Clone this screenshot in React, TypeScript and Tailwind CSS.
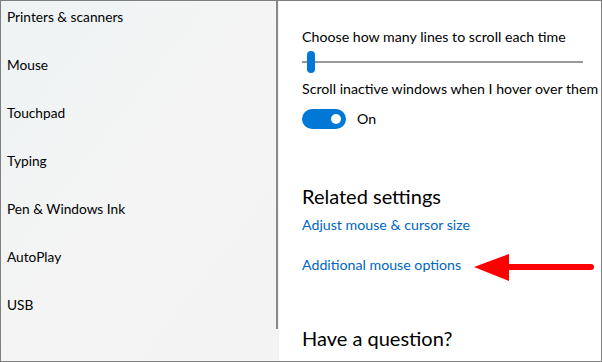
import React from 'react'

const navItems = ['Printers & scanners', 'Mouse', 'Touchpad', 'Typing', 'Pen & Windows Ink', 'AutoPlay', 'USB']

export default function App() {
  return (
    <div
      className="relative flex w-[602px] h-[362px] overflow-hidden border border-[#7f7f7f] bg-white text-[#000] whitespace-nowrap"
      style={{ fontFamily: 'Lato, "Open Sans", sans-serif' }}
    >
      {/* left nav */}
      <div className="relative w-[278px] shrink-0 bg-gradient-to-br from-[#eef3f4] via-[#f4f4f4] to-[#f3f3f3]">
        <div className="flex flex-col gap-[28px] pt-[6px] pl-[6px]">
          {navItems.map((item) => (
            <div key={item} className="h-[20px] text-[13.7px] leading-[20px]">
              {item}
            </div>
          ))}
        </div>
        <div className="absolute right-[1px] top-0 h-[328px] w-[2px] bg-[#8a8a8a]" />
      </div>

      {/* right content */}
      <div className="flex-1 flex flex-col pl-[23px] pt-[26px]">
        <div className="text-[14.2px] leading-[20px]">Choose how many lines to scroll each time</div>
        <div className="relative mt-[4px] h-[22px] w-[281px] flex items-center">
          <div className="h-[2px] w-full bg-[#999999]" />
          <div className="absolute left-[5px] top-0 h-[22px] w-[8px] rounded-full bg-[#0078d7]" />
        </div>
        <div className="mt-[6px] text-[14.2px] leading-[20px]">Scroll inactive windows when I hover over them</div>
        <div className="mt-[10px] flex items-center gap-[11px]">
          <div className="flex h-[20px] w-[44px] items-center justify-end rounded-full bg-[#0078d7] pr-[5px]">
            <div className="h-[10px] w-[10px] rounded-full bg-white" />
          </div>
          <span className="text-[14.2px] leading-[20px]">On</span>
        </div>

        <div className="mt-[54px] text-[20px] leading-[26px]">Related settings</div>
        <div className="mt-[6px] text-[14.2px] leading-[20px] text-[#0067c0]">Adjust mouse &amp; cursor size</div>
        <div className="mt-[20px] text-[14.2px] leading-[20px] text-[#0067c0]">Additional mouse options</div>

        <div className="mt-[50px] text-[20px] leading-[26px]">Have a question?</div>
      </div>

      {/* annotation arrow */}
      <svg className="absolute left-[472px] top-[252px]" width="122" height="30" viewBox="0 0 122 30">
        <line x1="30" y1="14" x2="118" y2="14" stroke="#ff0000" strokeWidth="6" strokeLinecap="round" />
        <polygon points="1,14 36,1 36,28" fill="#ff0000" />
      </svg>
    </div>
  )
}
